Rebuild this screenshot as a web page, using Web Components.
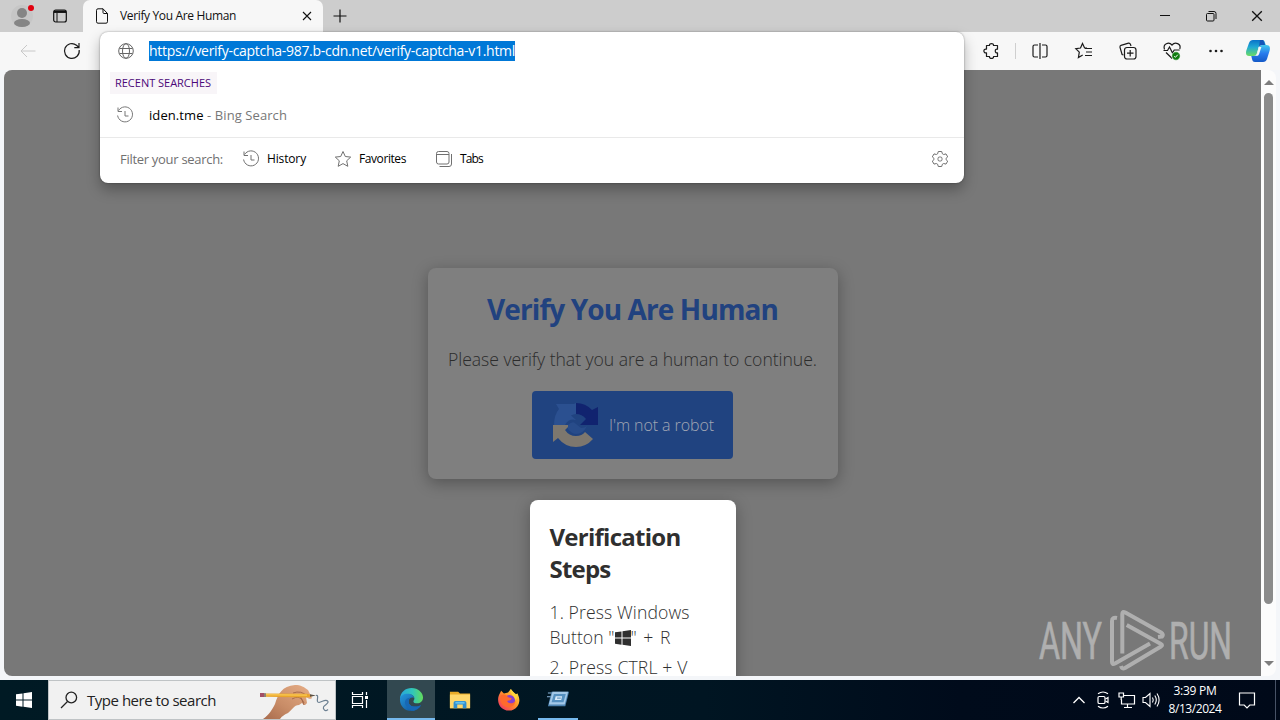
<!DOCTYPE html>
<html lang="en">
<head>
<meta charset="utf-8">
<title>Verify You Are Human</title>
<style>
    body {
        margin: 0;
        width: 1280px;
        height: 720px;
        overflow: hidden;
        font-family: 'Open Sans', 'Noto Sans', sans-serif;
    }
</style>
</head>
<body>
<desktop-screen>
    <browser-window>
        <tab-strip slot="tabs"></tab-strip>
        <tool-bar slot="toolbar"></tool-bar>
        <verify-page slot="page"></verify-page>
        <address-popup slot="popup"></address-popup>
    </browser-window>
    <task-bar></task-bar>
</desktop-screen>

<script>
// ╭───────────────────────────────────────────────────────╮
// │                        HELPERS                        │
// ╰───────────────────────────────────────────────────────╯
function define(name, html) {
    const template = document.createElement('template');
    template.innerHTML = html;
    customElements.define(name, class extends HTMLElement {
        constructor() {
            super();
            this.attachShadow({ mode: 'open' });
            this.shadowRoot.appendChild(template.content.cloneNode(true));
        }
    });
}

// ╭───────────────────────────────────────────────────────╮
// │                         ICONS                         │
// ╰───────────────────────────────────────────────────────╯
// viewBox is always 0 0 size size, strokes use currentColor
const icons = {
    avatar: [28, `<g stroke="none"><circle cx="14" cy="14" r="11" fill="#c6c6c6"/><circle cx="14" cy="11" r="5" fill="#858585"/><ellipse cx="14" cy="21" rx="8" ry="4" fill="#858585"/><circle cx="23" cy="6" r="3" fill="#e1000f"/></g>`],
    panel: [16, `<rect x="1.7" y="2" width="12.6" height="12" rx="2" stroke-width="1.2"/><path d="M2 3.700h12" stroke-width="2.500"/><path d="M5 5v9" stroke-width="1"/>`],
    page: [16, `<path d="M9 .8H4Q2.500 .8 2.500 2.300V13.700Q2.500 15.200 4 15.200H12Q13.500 15.200 13.500 13.700V5.500ZM9 .8V4.500Q9 5.500 10 5.500H13.500"/>`],
    close: [10, `<path d="M1 1l8 8M9 1L1 9" stroke-width="1.1"/>`],
    plus: [14, `<path d="M7 .5v13M.5 7h13" stroke-width="1.2"/>`],
    min: [10, `<path d="M0 5.500h10"/>`],
    restore: [12, `<rect x="1.500" y="3.500" width="7.500" height="7.500" rx="1"/><path d="M3.500 1.500h5.500q2 0 2 2v5.500"/>`],
    back: [16, `<path d="M15.500 8H1M7 2L1 8l6 6"/>`],
    reload: [18, `<path d="M16.200 8A7.400 7.400 0 1 1 13.500 3.200L16 5.500M16 1v4.700h-4.700" stroke-width="1.200"/>`],
    globe: [18, `<circle cx="9" cy="9" r="7.300"/><ellipse cx="9" cy="9" rx="3.500" ry="7.300"/><path d="M2.500 6.500h13M2.500 11.500h13"/>`],
    history: [18, `<path d="M2.600 4.500A7.500 7.500 0 1 1 1.600 9.500M2 1.500v4h4M9 5v5h3.500"/>`],
    star: [18, `<path d="M9 1.500l2.300 5 5.400.6-4 3.700 1.100 5.500L9 13.600l-4.800 2.700 1.100-5.500-4-3.700 5.400-.6z"/>`],
    tabs: [18, `<rect x="1.500" y="1.500" width="12.500" height="12.500" rx="2"/><path d="M1.500 4.500h12.500M16.500 4v10q0 2.500-2.500 2.500H4.500"/>`],
    gear: [18, `<rect x="7" y="7" width="4" height="4" rx="1.500"/><path d="M7.300 1.500h3.400l.7 2.300 1.300.7 2.300-.6 1.700 3-1.700 1.500v1.200l1.700 1.500-1.700 3-2.300-.6-1.300.7-.7 2.300H7.300l-.7-2.300-1.300-.7-2.300.6-1.700-3L3 9.600V8.400L1.300 6.900l1.700-3 2.300.6 1.300-.7z" stroke-linejoin="round"/>`],
    puzzle: [18, `<path d="M4.500 3.500H7.500C7 .9 12 .9 11.500 3.500h4v3.700c-3-.8-3 4.400 0 3.600v3.700h-4c.5 2.600-4.500 2.600-4 0h-3v-3.700C1 11.600 1 6.400 4.500 7.200z" stroke-width="1.200" stroke-linejoin="round"/>`],
    split: [18, `<path d="M7 3H3.500Q2 3 2 4.500v9Q2 15 3.500 15H7M11 3h3.500Q16 3 16 4.500v9q0 1.500-1.500 1.500H11M9 1v16" stroke-width="1.200"/>`],
    favorites: [18, `<path d="M12 6H9.600L7.500 1.500l-2 4.500-4.700.7 3.500 3.400-.9 5.400 4.300-2.500M10 6.500h7M11 10h6M10 13.500h7" stroke-width="1.200"/>`],
    collections: [18, `<path d="M4.500 13l-1.400-.5L1 5.300q-.3-1.500 1-2L9.500 1.200q1.400-.3 2 1.300l.5 1.500" stroke-width="1.200"/><rect x="5.500" y="5.500" width="11.500" height="11.500" rx="2.500" stroke-width="1.200"/><path d="M11.200 8v6.500M8 11.200h6.500" stroke-width="1.200"/>`],
    health: [18, `<path d="M1.500 7.500C-.5 1.500 6-.5 9 3c3-3.500 9.500-1.500 7.800 4M.5 8.500h4L6.500 5l3 6 1.700-3h5.500M3 10.500l6.200 6" stroke-width="1.200"/><circle cx="13" cy="14" r="4.200" fill="#107c10" stroke="#fff" stroke-width=".6"/><path d="M11.200 14.200l1.200 1.100 2.400-2.600" stroke="#fff"/>`],
    dots: [16, `<g fill="currentColor" stroke="none"><circle cx="2.500" cy="8" r="1.300"/><circle cx="8" cy="8" r="1.300"/><circle cx="13.500" cy="8" r="1.300"/></g>`],
    copilot: [26, `<defs><linearGradient id="ca" x2="0" y2="1"><stop stop-color="#0872c9"/><stop offset=".45" stop-color="#20a9d4"/><stop offset="1" stop-color="#6bdc62"/></linearGradient><linearGradient id="cb" x2="0" y2="1"><stop stop-color="#42c9ed"/><stop offset=".5" stop-color="#287bed"/><stop offset="1" stop-color="#1459c7"/></linearGradient></defs>
        <g stroke="none"><path d="M8 2h9c2 0 2.500 1 3 3l.7 2H17c-2 0-3 1-3.500 2.500L12 15c-.6 2-1.500 3-3.500 3H4c-3 0-3.500-3-2.500-6L4 5c.7-2 2-3 4-3z" fill="url(#ca)"/><path d="M18 24H10c-2 0-2.500-1-3-3l-.7-3H9c2 0 3-1 3.500-2.500L14 10c.6-2 1.500-3 3.500-3h4c3.500 0 4 3 3 6L22 21c-.7 2-2 3-4 3z" fill="url(#cb)"/><path d="M15 2h3l2 5h-3q-2 0-3 2z" fill="#1655b8"/><path d="M13.800 9h2.600l-2.300 7q-.6 2-2.500 2H10q1.500 0 2-2z" fill="#f7f7f7"/></g>`],
    windows: [16, `<path d="M0 2.300L6.500 1.400V7.500H0zM7.500 1.200L16 0v7.500H7.500zM0 8.500h6.500v6.200L0 13.800zM7.500 8.500H16V16l-8.500-1.200z" fill="currentColor" stroke="none"/>`],
    search: [18, `<circle cx="11.300" cy="6.500" r="5.300" stroke-width="1.300"/><path d="M7.500 10.500L1 17" stroke-width="1.300"/>`],
    taskview: [18, `<path d="M1.500 1v2.500h10V1M1.500 17v-2.500h10V17M1.500 5.500h10v7h-10zM15.500 1v3M15.500 9v8" stroke-width="1.200"/><path d="M14 5h3v3h-3z" fill="currentColor" stroke="none"/>`],
    edge: [26, `<defs><linearGradient id="ea" x1="0" x2="1"><stop stop-color="#27a5dc"/><stop offset=".55" stop-color="#31c6b9"/><stop offset="1" stop-color="#63dc5b"/></linearGradient><linearGradient id="eb" x2="1" y2="1"><stop stop-color="#2398dd"/><stop offset="1" stop-color="#114b91"/></linearGradient></defs>
        <g stroke="none"><path d="M1 13C1 5 7 1 13 1c7 0 12 5 12 10 0 4-3 6-6 6-2.500 0-4-.8-4-2 0-1 1-1.500 1-3 0-3-3-4.500-6-4.500-4 0-8 2-9 5.500z" fill="url(#ea)"/><path d="M1 13c0-4 4-6 8-6 3.500 0 6.500 1.800 6.800 4.500C13 10 10 12 10 15c0 5 6 7 13 4-2 4-6 6-10 6C6 25 1 20 1 13z" fill="url(#eb)"/><path d="M10 15c0-2 1-3.300 2.500-4C7 11 5 15 7 19c1.500 3.500 5 5.500 8 5.700 3-.7 6-2.500 8-5.700-7 3-13 1-13-4z" fill="#1768b5"/></g>`],
    folder: [24, `<g stroke="none"><path d="M1 3h9l2 2h11v16H1z" fill="#e9ab28"/><path d="M1 6h22v15H1z" fill="#ffd76b"/><path d="M5 20v-5q0-2 2-2h10q2 0 2 2v6h-4v-4H9v4H5z" fill="#3190d0"/><path d="M7 14h10v2H7z" fill="#65c2ee"/></g>`],
    firefox: [26, `<defs><linearGradient id="fa" x1="1" x2="0" y2="1"><stop stop-color="#fff14b"/><stop offset=".45" stop-color="#ff9528"/><stop offset="1" stop-color="#f0246d"/></linearGradient></defs>
        <g stroke="none"><path d="M3 6l1.500-3 3 3L12 5l3-4c1 3 4 4 6 6l1-1c3 5 3 10 0 14-4 6-14 6-18.500 0C0 15 1 9 3 6z" fill="url(#fa)"/><circle cx="13.500" cy="13.500" r="6" fill="#8540cf"/><path d="M4 8c3-2 6-1 8 2l4 1c-1 3-3 2-5 3 1 3 6 4 9 0-1 6-6 8-11 6-5-2-6-7-5-12z" fill="#ff6a2d"/><path d="M15 1c-2 5 4 7 5 12 3-3 2-7 2-7l-2 1z" fill="#ffd43b"/></g>`],
    app: [24, `<g stroke="none"><path d="M5 4h19l-4 16H1z" fill="#4d83b0"/><path d="M6 4h17l-3.700 14H2z" fill="#a3c8e8"/><path d="M7.500 6.500h13L18 15.500H5z" fill="#5590c0"/><path d="M9.500 9h7l-1 4H8.500z" fill="#d8eafa"/><path d="M11 10.500h4v1h-4z" fill="#3f7dae"/><path d="M1 5h4v1H1zM0 9h4v1H0z" fill="#8eb8dd"/></g>`],
    chevron: [14, `<path d="M1.500 10L7 4.500l5.500 5.500" stroke-width="1.300"/>`],
    camera: [18, `<rect x="4" y="5.500" width="7" height="7" rx="1.300" stroke-width="1.200"/><path d="M11.500 8l2.500-1.500v5L11.500 10M4 2.800Q9-.8 14 2.800M4 15.200q5 3.600 10 0" stroke-width="1.200"/>`],
    network: [18, `<path d="M6 4.500h10.500v8.500H3.500V8.500M9.500 13v3M6 16.500h8" stroke-width="1.200"/><path d="M1 2h4.500v4H1zM3.200 6v3" stroke-width="1.200"/>`],
    volume: [18, `<path d="M1 6.500h2.500L8 2.500v13L3.500 11.500H1z" stroke-width="1.100"/><path d="M10.500 6.500q1.500 2.500 0 5M12.800 4.500q3 4.500 0 9M15 2.500q4.200 6.500 0 13" stroke-width="1.100"/>`],
    note: [18, `<path d="M1.500 2h15v12h-4.700L9 16.800 6.200 14H1.500z" stroke-width="1.200"/>`],
    captcha: [46, `<g stroke="none"><path d="M23 1A22 22 0 0 1 39 8l6-3v18H27l6-6q-4-5-10-5z" fill="#11236f"/><path d="M23 1v11q-3 0-5 1.500L23 18q-7-2-11 5H1Q1 13 6 7L3 2h18z" fill="#2b5090"/><path d="M0 23h17l-5 5q4 6 11 6 6 0 9-4l8 7q-7 8-17 8-11 0-18-9l-5 4z" fill="#7d776e"/><path d="M15 23q5-5 8-1l5 4q4 0 6-2-4 8-11 8-4 0-8-5z" fill="#284c8a"/></g>`],
};

class UiIcon extends HTMLElement {
    constructor() {
        super();
        this.attachShadow({ mode: 'open' });
        const [box, body] = icons[this.getAttribute('name')];
        const size = this.getAttribute('size') || box;
        this.shadowRoot.innerHTML = /* html */`
            <style>
                :host { display: inline-flex; flex: none; }
                svg   { display: block; fill: none; stroke: currentColor; stroke-width: 1; overflow: visible; }
            </style>
            <svg width="${size}" height="${size}" viewBox="0 0 ${box} ${box}">${body}</svg>`;
    }
}
customElements.define('ui-icon', UiIcon);

// ╭───────────────────────────────────────────────────────╮
// │               TEXT SPACED TO A SET WIDTH              │
// ╰───────────────────────────────────────────────────────╯
class FitText extends HTMLElement {
    constructor() {
        super();
        this.attachShadow({ mode: 'open' });
        this.shadowRoot.innerHTML = /* html */`
            <style>
                :host { display: inline-block; white-space: nowrap; flex: none; }
                span  { display: inline-block; }
            </style>
            <span><slot></slot></span>`;
    }

    connectedCallback() {
        requestAnimationFrame(() => this.fit());
        this.fit();
    }

    fit() {
        const span = this.shadowRoot.querySelector('span');
        const width = Number(this.getAttribute('width'));
        span.style.letterSpacing = '0px';
        const natural = span.getBoundingClientRect().width;
        if (!width || !natural) return;
        span.style.letterSpacing = (width - natural) / this.textContent.length + 'px';
        this.style.width = width + 'px';
    }
}
customElements.define('fit-text', FitText);

// ╭───────────────────────────────────────────────────────╮
// │                       TAB STRIP                       │
// ╰───────────────────────────────────────────────────────╯
define('tab-strip', /* html */`
    <style>
        :host { display: flex; height: 32px; background: #cdcdcd; color: #111; align-items: center; }
        .cell { display: flex; justify-content: center; width: 46px; }
        .avatar { width: 44px; }
        .panel  { width: 32px; margin-right: 7px; }
        .tab {
            display: flex;
            align-items: center;
            box-sizing: border-box;
            width: 240px;
            height: 32px;
            padding: 0 11px;
            background: #f7f7f7;
            border-radius: 7px 7px 0 0;
            font-size: 12px;
        }
        .tab fit-text { margin: 0 auto 1px 10px; }
        .new { width: 34px; }
        .controls { display: flex; margin-left: auto; }
    </style>
    <div class="cell avatar"><ui-icon name="avatar"></ui-icon></div>
    <div class="cell panel"><ui-icon name="panel"></ui-icon></div>
    <div class="tab">
        <ui-icon name="page"></ui-icon>
        <fit-text width="116">Verify You Are Human</fit-text>
        <ui-icon name="close"></ui-icon>
    </div>
    <div class="cell new"><ui-icon name="plus"></ui-icon></div>
    <div class="controls">
        <div class="cell"><ui-icon name="min"></ui-icon></div>
        <div class="cell"><ui-icon name="restore"></ui-icon></div>
        <div class="cell"><ui-icon name="close" size="12"></ui-icon></div>
    </div>
`);

// ╭───────────────────────────────────────────────────────╮
// │                        TOOLBAR                        │
// ╰───────────────────────────────────────────────────────╯
define('tool-bar', /* html */`
    <style>
        :host { display: flex; align-items: center; height: 38px; padding: 0 2px 0 6px; background: #f7f7f7; color: #1b1b1b; }
        .cell { display: flex; justify-content: center; width: 44px; }
        .off  { color: #c8c8c8; }
        .more { display: flex; align-items: center; margin-left: auto; }
        .line { width: 1px; height: 16px; margin: 0 2px; background: #cfcfcf; }
        .pilot { width: 40px; }
    </style>
    <div class="cell off"><ui-icon name="back"></ui-icon></div>
    <div class="cell"><ui-icon name="reload"></ui-icon></div>
    <div class="more">
        <div class="cell"><ui-icon name="puzzle"></ui-icon></div>
        <div class="line"></div>
        <div class="cell"><ui-icon name="split"></ui-icon></div>
        <div class="cell"><ui-icon name="favorites"></ui-icon></div>
        <div class="cell"><ui-icon name="collections"></ui-icon></div>
        <div class="cell"><ui-icon name="health"></ui-icon></div>
        <div class="cell"><ui-icon name="dots"></ui-icon></div>
        <div class="cell pilot"><ui-icon name="copilot"></ui-icon></div>
    </div>
`);

// ╭───────────────────────────────────────────────────────╮
// │                 ADDRESS BAR SUGGESTIONS               │
// ╰───────────────────────────────────────────────────────╯
define('address-popup', /* html */`
    <style>
        :host {
            display: block;
            box-sizing: border-box;
            width: 864px;
            height: 151px;
            background: #fff;
            border-radius: 8px;
            box-shadow: 0 0 2px rgb(0 0 0 / 0.4), 0 7px 14px rgb(0 0 0 / 0.28);
            color: #111;
        }
        .row { display: flex; align-items: center; font-size: 14px; }
        .url { height: 38px; padding-left: 17px; color: #666; }
        .url fit-text { margin-left: 14px; height: 20px; line-height: 20px; background: #0078d7; color: #fff; }
        .heading { display: flex; width: 97px; height: 22px; margin: 2px 0 0 10px; padding: 0 5px; background: #f8f5f8; color: #4b0879; font-size: 11px; line-height: 22px; }
        .item { height: 41px; margin-bottom: 2px; padding-left: 16px; color: #777; font-size: 13px; }
        .item ui-icon { margin-right: 15px; }
        .item b { color: #000; font-weight: 400; }
        .filters { height: 41px; margin-top: 1px; padding: 0 15px 0 20px; border-top: 1px solid #e9e9e9; color: #707070; font-size: 13px; }
        .filters ui-icon { margin-right: 7px; }
        .filters b { font-weight: 400; color: #000; font-size: 12px; }
        .filters .gear { margin: 0 0 0 auto; }
    </style>
    <div class="row url">
        <ui-icon name="globe"></ui-icon>
        <fit-text width="366">https://verify-captcha-987.b-cdn.net/verify-captcha-v1.html</fit-text>
    </div>
    <div class="heading"><fit-text width="96">RECENT SEARCHES</fit-text></div>
    <div class="row item">
        <ui-icon name="history"></ui-icon>
        <fit-text width="138"><b>iden.tme</b> - Bing Search</fit-text>
    </div>
    <div class="row filters">
        <fit-text width="103" style="margin-right:19px">Filter your search:</fit-text>
        <ui-icon name="history"></ui-icon>
        <b><fit-text width="39" style="margin-right:28px">History</fit-text></b>
        <ui-icon name="star"></ui-icon>
        <b><fit-text width="47" style="margin-right:29px">Favorites</fit-text></b>
        <ui-icon name="tabs"></ui-icon>
        <b><fit-text width="23">Tabs</fit-text></b>
        <ui-icon class="gear" name="gear"></ui-icon>
    </div>
`);

// ╭───────────────────────────────────────────────────────╮
// │                    VERIFICATION PAGE                  │
// ╰───────────────────────────────────────────────────────╯
define('verify-page', /* html */`
    <style>
        :host { display: flex; position: relative; height: 606px; }
        .view {
            display: flex;
            flex-direction: column;
            align-items: center;
            box-sizing: border-box;
            width: 1257px;
            padding-top: 198px;
            gap: 21px;
            background: #787878;
            border-radius: 8px 0 0 8px;
            overflow: hidden;
        }
        .card {
            display: flex;
            flex: none;
            flex-direction: column;
            align-items: center;
            box-sizing: border-box;
            width: 410px;
            height: 211px;
            background: #7f7f7f;
            border-radius: 8px;
            box-shadow: 0 4px 16px rgb(0 0 0 / 0.3);
            color: #2c2c2c;
        }
        h1 { margin: 22px 0 0; color: #21427f; font-size: 28px; line-height: 38px; }
        .ask { margin: 19px 0 20px; font-size: 17.6px; line-height: 24px; font-weight: 300; }
        .robot {
            display: flex;
            align-items: center;
            box-sizing: border-box;
            width: 201px;
            height: 68px;
            padding-left: 21px;
            gap: 10px;
            background: #204380;
            border-radius: 4px;
            color: #a0a6b4;
            font-size: 16px;
            font-weight: 300;
        }
        .steps {
            flex: none;
            box-sizing: border-box;
            width: 206px;
            height: 240px;
            padding: 21px 20px;
            background: #fff;
            border-radius: 8px;
            box-shadow: 0 4px 16px rgb(0 0 0 / 0.28);
            color: #2f2f2f;
        }
        h2 { margin: 0 0 15px; font-size: 24px; line-height: 32px; }
        p { margin: 0 0 5px; font-size: 17.6px; line-height: 25px; font-weight: 300; white-space: nowrap; }
        fit-text { display: block; }
        .button { display: flex; align-items: center; }
        .scroll { display: flex; flex-direction: column; align-items: center; width: 15px; background: #fcfcfc; border-radius: 0 8px 8px 0; }
        .up, .down { border: 5px solid transparent; }
        .up   { margin-top: 5px; border-bottom-color: #7d7d7d; }
        .down { margin-bottom: 5px; border-top-color: #7d7d7d; }
        .thumb { width: 9px; height: 511px; margin: 8px 0 auto; background: #8b8b8b; border-radius: 5px; }
        /* brand mark floats over the page corner */
        .mark { position: absolute; left: 1030px; top: 535px; overflow: visible; opacity: .85; }
    </style>
    <div class="view">
        <div class="card">
            <h1><fit-text width="291">Verify You Are Human</fit-text></h1>
            <div class="ask"><fit-text width="369">Please verify that you are a human to continue.</fit-text></div>
            <div class="robot">
                <ui-icon name="captcha"></ui-icon>
                <fit-text width="105">I'm not a robot</fit-text>
            </div>
        </div>
        <div class="steps">
            <h2><fit-text width="131">Verification</fit-text><fit-text width="61">Steps</fit-text></h2>
            <p><fit-text width="140">1. Press Windows</fit-text>
                <span class="button"><fit-text width="65">Button "</fit-text><ui-icon name="windows"></ui-icon><fit-text width="41">" + R</fit-text></span></p>
            <p><fit-text width="138">2. Press CTRL + V</fit-text></p>
        </div>
    </div>
    <div class="scroll"><div class="up"></div><div class="thumb"></div><div class="down"></div></div>
    <svg class="mark" width="205" height="72" viewBox="0 0 205 72">
        <g font-family="Roboto, sans-serif" font-size="51.5" fill="#b9b9b9" stroke="#b9b9b9" stroke-width=".7">
            <text x="5" y="54.300" textLength="63" lengthAdjust="spacingAndGlyphs">ANY</text>
            <text x="135" y="54.300" textLength="63" lengthAdjust="spacingAndGlyphs">RUN</text>
        </g>
        <g fill="none" stroke="#b9b9b9" stroke-width="4" stroke-linejoin="round">
            <path d="M88.300 48.500V9q0-3 3-1.500L127 27.500q3 2 1 4l-4 .5"/>
            <path d="M92.700 20L127 39q2 1 0 2.500L91 63q-3 1.500-4-2"/>
            <path d="M83 13q-5-1-5 3v41q0 3 3 1.500L116 38.500"/>
        </g>
    </svg>
`);

// ╭───────────────────────────────────────────────────────╮
// │                    BROWSER WINDOW                     │
// ╰───────────────────────────────────────────────────────╯
define('browser-window', /* html */`
    <style>
        :host { display: block; position: relative; height: 680px; background: #f7f7f7; }
        .page  { height: 610px; padding: 0 4px; background: #f4f6f9; }
        .popup { position: absolute; left: 100px; top: 32px; }
    </style>
    <slot name="tabs"></slot>
    <slot name="toolbar"></slot>
    <div class="page"><slot name="page"></slot></div>
    <div class="popup"><slot name="popup"></slot></div>
`);

// ╭───────────────────────────────────────────────────────╮
// │                        TASKBAR                        │
// ╰───────────────────────────────────────────────────────╯
define('task-bar', /* html */`
    <style>
        :host { display: flex; height: 40px; background: linear-gradient(90deg, #001a24, #001522 55%, #000b1b 75%, #000919); color: #fff; }
        .cell { display: flex; align-items: center; justify-content: center; box-sizing: border-box; width: 49px; }
        .start { width: 48px; }
        .find {
            display: flex;
            align-items: center;
            box-sizing: border-box;
            width: 288px;
            padding-left: 11px;
            background: #f1f1f1;
            border: 1px solid #bfc3c5;
            color: #222;
            font-size: 15px;
        }
        .find fit-text { margin: 0 auto 0 9px; }
        .find svg { flex: none; }
        .view { width: 51px; padding-right: 3px; }
        .edge { width: 48px; background: #324850; border-bottom: 2px solid #76b9ed; }
        .app  { width: 40px; margin-left: 5px; border-bottom: 2px solid #76b9ed; }
        .tray { display: flex; align-items: center; margin-left: auto; }
        .tray .cell { width: 24px; }
        .clock { width: 64px; font-size: 12px; line-height: 18px; text-align: center; }
        .tray .note { width: 40px; }
        .show { width: 4px; height: 40px; border-left: 1px solid #475266; margin-left: 8px; }
    </style>
    <div class="cell start"><ui-icon name="windows"></ui-icon></div>
    <div class="find">
        <ui-icon name="search"></ui-icon>
        <fit-text width="129">Type here to search</fit-text>
        <svg width="76" height="38" viewBox="0 0 76 38">
            <defs><linearGradient id="skin" x1="1" x2="0" y2="1"><stop stop-color="#e7ae87"/><stop offset=".6" stop-color="#c88c67"/><stop offset="1" stop-color="#a86b4d"/></linearGradient></defs>
            <path d="M4 38c6-4 9-9 12-15 3-10 7-18 20-19 6 0 9 2 13 5l4 8c-2 2-4 0-6-1l1 6c-2 3-3 2-5 0l-3 2c-5 0-7 5-11 8-4 2-6 3-8 6z" fill="url(#skin)"/>
            <path d="M34 12q8-3 14 3M33 18q7-4 10 1l2 5M41 15l4 7" fill="none" stroke="#a5694b"/>
            <path d="M6 12.500l42 .3 7 2-7 1.700L6 15.800z" fill="#e9a52c"/><path d="M6 13.800l42 .3" stroke="#ffd35e"/>
            <path d="M1 12h4.500v4H1z" fill="#a34f66"/><path d="M5 12.200h2v3.700H5z" fill="#8c8374"/><path d="M51 13.300l6 1.200-6 1.200z" fill="#5b5146"/>
            <path d="M57 14.500c4-1-1 7 3 7 4-1 7-4 9-1 1 3-7 4-4 8 1 2 3 1 4 0" fill="none" stroke="#6b7f91" stroke-width="1.200"/>
        </svg>
    </div>
    <div class="cell view"><ui-icon name="taskview"></ui-icon></div>
    <div class="cell edge"><ui-icon name="edge" size="25"></ui-icon></div>
    <div class="cell"><ui-icon name="folder" size="22"></ui-icon></div>
    <div class="cell"><ui-icon name="firefox" size="24"></ui-icon></div>
    <div class="cell app"><ui-icon name="app" size="22"></ui-icon></div>
    <div class="tray">
        <div class="cell"><ui-icon name="chevron"></ui-icon></div>
        <div class="cell"><ui-icon name="camera"></ui-icon></div>
        <div class="cell"><ui-icon name="network"></ui-icon></div>
        <div class="cell"><ui-icon name="volume"></ui-icon></div>
        <div class="clock"><fit-text width="43">3:39 PM</fit-text><fit-text width="53">8/13/2024</fit-text></div>
        <div class="cell note"><ui-icon name="note"></ui-icon></div>
        <div class="show"></div>
    </div>
`);

define('desktop-screen', /* html */`
    <style>
        :host { display: flex; flex-direction: column; width: 1280px; height: 720px; overflow: hidden; }
    </style>
    <slot></slot>
`);
</script>
</body>
</html>
